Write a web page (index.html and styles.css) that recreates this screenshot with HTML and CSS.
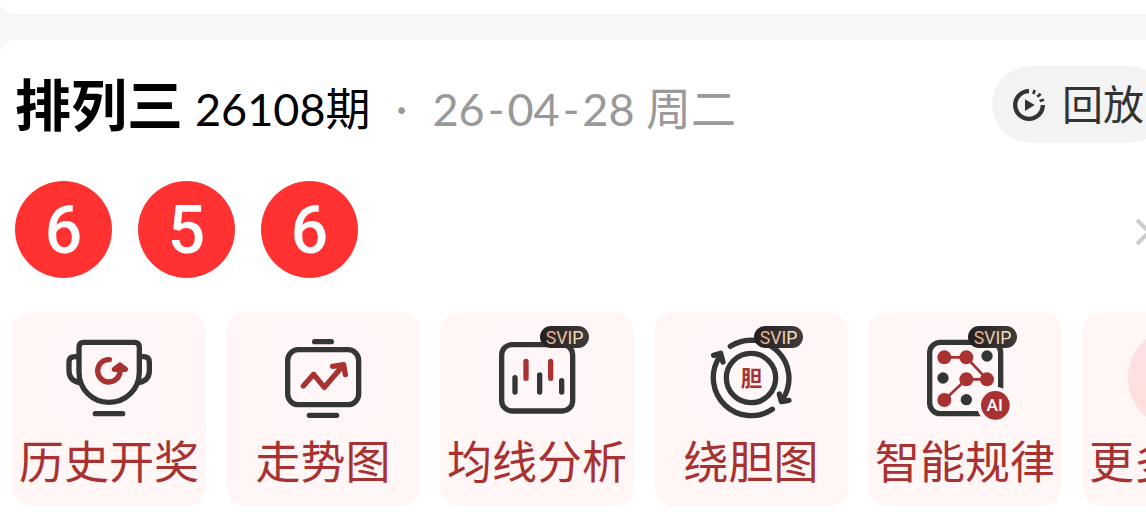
FILE: index.html
```html
<!DOCTYPE html>
<html lang="zh-CN">
<head>
<meta charset="utf-8">
<title>排列三</title>
<link rel="stylesheet" href="styles.css">
</head>
<body>
<svg class="defs" aria-hidden="true">
  <defs>
    <linearGradient id="gold" x1="0" x2="1" y1="0" y2="0"><stop offset="0" stop-color="#dca58b"/><stop offset="1" stop-color="#faecd0"/></linearGradient>
    <linearGradient id="coal" x1="0" x2="1" y1="0" y2="0"><stop offset="0" stop-color="#231f20"/><stop offset="1" stop-color="#403c3b"/></linearGradient>
    <g id="svip">
      <rect x="318" y="78" width="147" height="66" rx="33" fill="url(#coal)"/>
    </g>
  </defs>
</svg>
<div class="previous"></div>
<main class="card">
  <header class="head">
    <h1 class="name">排列三</h1>
    <span class="issue">26108期</span>
    <span class="dot">·</span>
    <span class="date">26<span class="dash">-</span>04<span class="dash">-</span>28 周二</span>
    <button class="replay" type="button">
      <svg class="replay-icon" viewBox="126 114 96 96" fill="none" stroke="#333" aria-hidden="true">
        <path d="M174 120.500A41.500 41.500 0 1 0 215.500 162" stroke-width="13"/>
        <path d="M187 129l4-12M199 137l10-9M206 150l13-4" stroke-width="8"/>
        <path d="M162 145v35l29-18z" fill="#333" stroke="none"/>
      </svg>
      <span>回放</span>
    </button>
  </header>
  <section class="result">
    <div class="balls"><span class="ball">6</span><span class="ball">5</span><span class="ball">6</span></div>
    <svg class="chevron" viewBox="0 0 18 28" fill="none" stroke="#ccc" stroke-width="4" aria-hidden="true"><path d="M1 2l12 12L1 26"/></svg>
  </section>
  <nav class="tools">
    <a class="tool" href="#">
      <svg class="icon" viewBox="174 81 306 306" fill="none" stroke="#333635" stroke-width="16" stroke-linecap="round" stroke-linejoin="round" aria-hidden="true">
        <path d="M251 127H403Q418 127 418 142V216C418 268 377 307 327 307S237 268 237 216V142Q237 127 251 127Z"/>
        <path d="M234 170H225Q207 170 207 187V212Q207 240 236 247M421 170H430Q448 170 448 187V212Q448 240 419 247M286 341H368"/>
        <path d="M328 179A33.500 33.500 0 1 0 360 212V206" stroke="#a83131"/>
        <path d="M343 208L360 195L376 208Z" fill="#a83131" stroke="#a83131"/>
      </svg>
      <span class="label">历史开奖</span>
    </a>
    <a class="tool" href="#">
      <svg class="icon" viewBox="156 81 306 306" fill="none" stroke="#333635" stroke-width="16" stroke-linecap="round" stroke-linejoin="round" aria-hidden="true">
        <rect x="203" y="149" width="213" height="165" rx="32"/>
        <path d="M284 125H334M268 346H350"/>
        <path d="M250 258L281 223L313 262L370 196M338 199L371 194L376 224" stroke="#a83131"/>
      </svg>
      <span class="label">走势图</span>
    </a>
    <a class="tool" href="#">
      <svg class="icon" viewBox="156 81 306 306" fill="none" stroke="#333635" stroke-width="16" stroke-linecap="round" aria-hidden="true">
        <rect x="203" y="134" width="213" height="199" rx="31"/>
        <path d="M243 233V276M317 225V276M383 242V276"/>
        <path d="M276 184V235M350 184V235" stroke="#a83131"/>
        <use href="#svip" stroke="none"/>
        <text class="svip-text" x="392" y="131">SVIP</text>
      </svg>
      <span class="label">均线分析</span>
    </a>
    <a class="tool" href="#">
      <svg class="icon" viewBox="156 81 306 306" fill="none" stroke="#333635" stroke-width="16" stroke-linecap="round" stroke-linejoin="round" aria-hidden="true">
        <circle cx="309" cy="234" r="74"/>
        <path d="M247 139A114 114 0 0 1 405 296M373 328A114 114 0 0 1 213 173"/>
        <path d="M197 166L218 160L225 186M394 282L400 305L423 301"/>
        <text class="core-text" x="310" y="259">胆</text>
        <use href="#svip" stroke="none"/>
        <text class="svip-text" x="392" y="131">SVIP</text>
      </svg>
      <span class="label">绕胆图</span>
    </a>
    <a class="tool" href="#">
      <svg class="icon" viewBox="156 81 306 306" fill="none" stroke="#333635" stroke-width="16" aria-hidden="true">
        <rect x="203" y="127" width="213" height="214" rx="32"/>
        <g fill="#333635" stroke="none"><circle cx="375" cy="168" r="17"/><circle cx="243" cy="234" r="17"/><circle cx="313" cy="299" r="17"/></g>
        <path d="M247 172H313L375 238H313L247 300" stroke="#a83131" stroke-width="8"/>
        <g fill="#a83131" stroke="none"><circle cx="247" cy="172" r="21"/><circle cx="313" cy="172" r="21"/><circle cx="375" cy="238" r="21"/><circle cx="313" cy="238" r="21"/><circle cx="247" cy="300" r="21"/></g>
        <circle cx="400" cy="316" r="49" fill="#a83131" stroke="#fff6f7" stroke-width="12"/>
        <text class="ai-text" x="398" y="334">AI</text>
        <use href="#svip" stroke="none"/>
        <text class="svip-text" x="392" y="131">SVIP</text>
      </svg>
      <span class="label">智能规律</span>
    </a>
    <a class="tool" href="#">
      <span class="more-icon"></span>
      <span class="label label-start">更多</span>
    </a>
  </nav>
</main>
</body>
</html>
```
FILE: styles.css
```css
* { box-sizing: border-box; }
body {
  margin: 0;
  background: #f7f7f7;
  color: #000;
  font-family: Lato, "Noto Sans CJK SC", sans-serif;
  overflow: hidden;
}
.defs { position: absolute; width: 0; height: 0; }
.previous { height: 14px; background: #fff; border-radius: 0 0 0 16px; }
.card {
  margin-top: 26px;
  padding: 26px 0 24px;
  background: #fff;
  border-radius: 16px 0 0 0;
  overflow: hidden;
}
.head {
  display: flex;
  align-items: center;
  height: 77px;
  margin-right: -22px;
  padding-left: 15px;
  font-size: 45px;
  line-height: 60px;
  white-space: nowrap;
}
.name { margin: 0 12px 0 0; font-size: 56px; font-weight: 700; line-height: 76px; }
.issue, .date { padding-top: 8px; }
.dot, .date { color: #999; }
.dot { width: 62px; padding-top: 4px; text-align: center; }
.dash { padding: 0 3px; }
.replay {
  display: flex;
  align-items: center;
  gap: 17px;
  height: 77px;
  margin-left: auto;
  padding: 0 24px 0 21px;
  border: 0;
  border-radius: 39px;
  background: #f3f3f3;
  color: #333;
  font: inherit;
  font-size: 41px;
}
.replay-icon { width: 32px; height: 32px; }
.result {
  display: flex;
  align-items: center;
  justify-content: space-between;
  margin: 38px -8px 0 15px;
}
.balls { display: flex; gap: 26px; }
.ball {
  display: grid;
  place-items: center;
  width: 97px;
  height: 97px;
  padding-top: 3px;
  border-radius: 50%;
  background: #ff3131;
  color: #fff;
  font-family: Roboto, sans-serif;
  font-size: 66px;
  font-weight: 500;
  line-height: 94px;
}
.chevron { width: 18px; height: 28px; margin-top: 5px; }
.tools { display: flex; gap: 20px; margin-top: 34px; padding-left: 12px; }
.tool {
  display: flex;
  flex: none;
  flex-direction: column;
  align-items: center;
  width: 194px;
  height: 194px;
  padding: 15px 7px 0;
  border-radius: 20px;
  background: #fff6f5;
  color: #a83131;
  text-decoration: none;
}
.icon { width: 102px; height: 102px; border-radius: 20px; background: #fff6f8; overflow: visible; }
.label { font-size: 45px; line-height: 66px; white-space: nowrap; }
.label-start { align-self: flex-start; }
.more-icon {
  width: 102px;
  height: 102px;
  border-radius: 50%;
  background: linear-gradient(150deg, #fbe0e8, #ffe0dc 50%, #ffe6e2);
}
.svip-text, .ai-text, .core-text { stroke: none; text-anchor: middle; }
.svip-text { fill: url(#gold); font: 400 53px Roboto, sans-serif; }
.ai-text { fill: #fff; font: 500 52px Roboto, sans-serif; }
.core-text { fill: #a83131; font: 700 64px "Noto Sans CJK SC", sans-serif; }
```
